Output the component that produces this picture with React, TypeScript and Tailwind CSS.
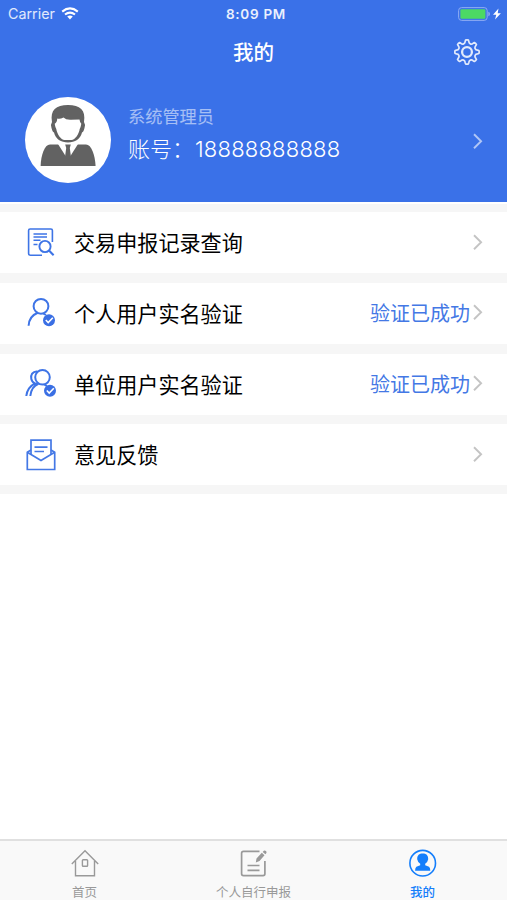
import type { ReactNode } from 'react';

interface MenuItem {
  label: string;
  status?: string;
  icon: ReactNode;
}

const fontClass = "font-[Inter,'Noto_Sans_CJK_SC',sans-serif]";

// 歯車の輪郭（8枚歯）
function gearPath() {
  const point = (r: number, deg: number) => {
    const a = (deg * Math.PI) / 180;
    return `${(13 + r * Math.sin(a)).toFixed(2)} ${(13 - r * Math.cos(a)).toFixed(2)}`;
  };
  let d = `M${point(12, -7)}`;
  for (let i = 0; i < 8; i++) {
    const t = i * 45;
    d += `Q${point(12.4, t)} ${point(12, t + 7)}L${point(10.6, t + 10)}`;
    d += `C${point(8.4, t + 14)} ${point(8.4, t + 31)} ${point(10.6, t + 35)}L${point(12, t + 38)}`;
  }
  return d + 'Z';
}

function GearIcon() {
  return (
    <svg width="26" height="26" viewBox="0 0 26 26" fill="none" stroke="#fff" strokeOpacity=".85" strokeLinejoin="round">
      <path d={gearPath()} strokeWidth="1.7" />
      <circle cx="13" cy="13" r="4.9" strokeWidth="2.3" />
    </svg>
  );
}

function WifiIcon() {
  return (
    <svg width="18" height="13" viewBox="0 0 18 13" fill="none" stroke="#fff" strokeWidth="2.1">
      <path d="M1.2 4.6Q9 -1.8 16.8 4.6" />
      <path d="M4 7.5Q9 3.6 14 7.5" />
      <path d="M9 12.4L6.2 9.6Q9 7.6 11.8 9.6Z" fill="#fff" stroke="none" />
    </svg>
  );
}

function BatteryIcon() {
  return (
    <svg width="43" height="14" viewBox="0 0 43 14">
      <rect x=".6" y=".6" width="28.6" height="12.8" rx="3" fill="none" stroke="#8eacf3" strokeWidth="1" />
      <rect x="2.4" y="2.3" width="25" height="9.4" rx="1.2" fill="#4cd964" />
      <path d="M30.3 4.8Q32 5.3 32 7T30.3 9.2Z" fill="#8eacf3" />
      <path d="M40.5 1.5L35 7.7H38.3L37 12.6L42.9 6.2H39.7Z" fill="#fff" />
    </svg>
  );
}

function Avatar() {
  return (
    <svg width="86" height="86" viewBox="0 0 86 86">
      <circle cx="43" cy="43" r="43" fill="#fff" />
      <path
        d="M27 25C25 13 31 8 43 8C55 8 61 13 59 25Q60.500 27 59.500 31Q58.500 35 57 35.500C55.500 42 50 45.500 43 45.500S30.500 42 29 35.500Q27.500 35 26.500 31Q25.500 27 27 25Z"
        fill="#626262"
      />
      <path
        d="M32.300 21.500Q35 22.300 38.500 20.500Q41 23 46 22.700L54.500 22.500Q55 26 56.300 26.700Q55.800 30 54.700 32C54 37 50 43 46.500 43H39.500C36 43 32 37 31.300 32Q30.200 30 29.700 26.700Q31.800 26 32.300 21.500Z"
        fill="#fff"
      />
      <path d="M25 47.400H61C66.500 47.400 70 58 70.600 69H15.600C16 58 19.500 47.400 25 47.400Z" fill="#626262" />
      <path d="M33 47L41.200 60H44.800L53 47Z" fill="#fff" />
      <path d="M40.200 47.400H45.800L44.800 51L46 60L43 63L40 60L41.200 51Z" fill="#626262" />
    </svg>
  );
}

function Chevron({ className }: { className: string }) {
  return (
    <svg width="12" height="18" viewBox="0 0 12 18" fill="none" stroke="currentColor" strokeWidth="1.9" className={className}>
      <path d="M1 1.300L8.100 8.300L1 15.300" />
    </svg>
  );
}

function RecordIcon() {
  return (
    <svg width="32" height="32" viewBox="0 0 32 32" fill="none" stroke="#3e74e6" strokeWidth="1.6">
      <path d="M17 28.300H5.500Q3.600 28.300 3.600 26.400V3.500Q3.600 2 5.100 2H25.900Q27.400 2 27.400 3.500V15" />
      <path d="M8.500 7H22M8.500 10H22M8.500 13.300H15.500M8.500 17.500H12.500" />
      <circle cx="20" cy="19.500" r="5.600" strokeWidth="1.900" />
      <path d="M24 23.500L28.600 28.200" strokeWidth="2.100" />
    </svg>
  );
}

function CheckBadge() {
  return (
    <>
      <circle cx="24" cy="23.300" r="6" fill="#3a6fe4" stroke="none" />
      <path d="M20.800 23L23.200 25.500L27.800 20.800" stroke="#fff" strokeWidth="1.600" />
    </>
  );
}

function PersonIcon() {
  return (
    <svg width="32" height="32" viewBox="0 0 32 32" fill="none" stroke="#3e74e6" strokeWidth="2">
      <circle cx="16" cy="9.300" r="7.400" />
      <path d="M3.600 28.700C4 22.500 7 18 12.800 15.800M18 16.300L21 18" />
      <CheckBadge />
    </svg>
  );
}

function CompanyIcon() {
  return (
    <svg width="32" height="32" viewBox="0 0 32 32" fill="none" stroke="#3e74e6" strokeWidth="2">
      <circle cx="17.500" cy="9.300" r="7.300" />
      <path d="M12.500 3.500C7.500 3 5.300 7 6.300 11Q7.200 14.500 10 15.400C5 18 2 21.500 1.300 28M5.300 28C6 21.500 9 17.500 13.500 15.800M19 16.300L22 18" />
      <g transform="translate(1 -.5)">
        <CheckBadge />
      </g>
    </svg>
  );
}

function FeedbackIcon() {
  return (
    <svg width="32" height="32" viewBox="0 0 32 32" fill="none" stroke="#4478e5" strokeWidth="1.700">
      <path d="M6 11L2.300 13.300V30.500H29.700V13.300L26 11" />
      <path d="M2.300 13.300L16 21.500L29.700 13.300" />
      <path d="M6 15.300V1.200H26V15.300" />
      <path d="M9.500 8.200H22.500M9.500 12.500H19" />
    </svg>
  );
}

const menuItems: MenuItem[] = [
  { label: '交易申报记录查询', icon: <RecordIcon /> },
  { label: '个人用户实名验证', status: '验证已成功', icon: <PersonIcon /> },
  { label: '单位用户实名验证', status: '验证已成功', icon: <CompanyIcon /> },
  { label: '意见反馈', icon: <FeedbackIcon /> },
];

const tabs = [
  {
    label: '首页',
    active: false,
    icon: (
      <svg width="30" height="30" viewBox="0 0 30 30" fill="none" stroke="currentColor" strokeWidth="1.400">
        <path d="M1.800 17L15 3.800L28.200 17M5.500 14V28.700H24.500V14" />
        <rect x="12.400" y="12.800" width="5.200" height="6.500" rx=".8" />
      </svg>
    ),
  },
  {
    label: '个人自行申报',
    active: false,
    icon: (
      <svg width="30" height="30" viewBox="0 0 30 30" fill="none" stroke="currentColor" strokeWidth="1.700">
        <path d="M20.500 4.300H4.500Q2.600 4.300 2.600 6.200V26.800Q2.600 28.700 4.500 28.700H24Q25.900 28.700 25.900 26.800V14" />
        <path d="M8.500 18.500H20.500M8.500 23.300H20.500" />
        <path d="M16.800 15.500L17.500 11.500L22.800 5.800L25.500 8.200L20.500 13.900ZM23.700 4.900L24.800 3.700Q26.200 3.300 27.200 4.300Q27.800 5.200 27.400 6L26.400 7.300Z" fill="currentColor" stroke="none" />
      </svg>
    ),
  },
  {
    label: '我的',
    active: true,
    icon: (
      <svg width="30" height="30" viewBox="0 0 30 30">
        <circle cx="14.700" cy="16.200" r="12.800" fill="none" stroke="currentColor" strokeWidth="1.600" />
        <path d="M9.200 12.300C9.200 8.300 11.200 6.600 14.700 6.600S20.200 8.300 20.200 12.300Q19.600 15.500 17.200 16.800V18.300L21 19.700Q22.300 20.700 22.300 23.800H7.100Q7.100 20.700 8.400 19.700L12.200 18.300V16.800Q9.800 15.500 9.200 12.300Z" fill="currentColor" />
      </svg>
    ),
  },
];

export default function App() {
  return (
    <div className={`flex h-[900px] w-[507px] flex-col overflow-hidden bg-white ${fontClass}`}>
      <header className="h-[202px] shrink-0 bg-[#3a71e8] text-white">
        {/* ステータスバー */}
        <div className="grid h-[27px] grid-cols-3 items-center pr-[6px] pl-[8px]">
          <div className="flex items-center gap-[6px]">
            <span className="text-[14.300px] text-white/85">Carrier</span>
            <WifiIcon />
          </div>
          <span className="pt-px pl-[3px] text-center text-[13.500px] font-semibold tracking-[0.700px] whitespace-nowrap text-white/90">8:09 PM</span>
          <div className="flex justify-end">
            <BatteryIcon />
          </div>
        </div>

        {/* タイトル */}
        <div className="grid h-[50px] grid-cols-3 items-center pr-[27px]">
          <h1 className="col-start-2 pt-[3px] pl-[27px] text-center text-[20.500px] leading-none font-medium">我的</h1>
          <button className="justify-self-end" aria-label="设置">
            <GearIcon />
          </button>
        </div>

        {/* プロフィール */}
        <div className="flex items-center pt-5 pr-[22px] pl-[25px]">
          <Avatar />
          <div className="ml-[17px] flex-1">
            <p className="text-[17.200px] leading-[26px] text-white/55">系统管理员</p>
            <p className="flex pt-[3px] pb-3 text-[22px] leading-[32px] font-light">
              <span className="mr-px">账号：</span>
              <span className="tracking-[0.200px]">18888888888</span>
            </p>
          </div>
          <Chevron className="mt-[3px] text-white/60" />
        </div>
      </header>

      {/* メニュー */}
      <main className="mt-[2px] flex flex-col gap-[9.800px] bg-[#f6f6f6] pt-2 pb-[9px]">
        {menuItems.map((item) => (
          <button key={item.label} className="flex h-[61px] items-center bg-white pr-[22px] pl-[25px] text-left">
            {item.icon}
            <span className="ml-[17px] flex-1 pt-[2px] text-[21.100px] leading-none text-black">{item.label}</span>
            {item.status && <span className="mr-[3px] pt-[2px] text-[20px] leading-none text-[#4478e5]">{item.status}</span>}
            <Chevron className="text-[#c4c4c4]" />
          </button>
        ))}
      </main>

      {/* タブバー */}
      <nav className="mt-auto grid h-[61px] shrink-0 grid-cols-3 border-t-2 border-[#e0e0e0] bg-[#f9f9f9]">
        {tabs.map((tab) => (
          <button
            key={tab.label}
            className={`flex flex-col items-center pt-[6px] ${tab.active ? 'font-medium text-[#147efb]' : 'text-[#999]'}`}
          >
            {tab.icon}
            <span className="mt-[10px] text-[12.500px] leading-none">{tab.label}</span>
          </button>
        ))}
      </nav>
    </div>
  );
}
